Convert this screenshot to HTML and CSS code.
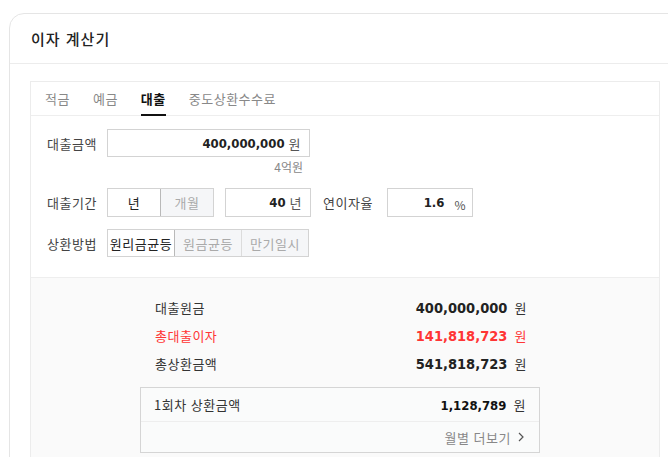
FILE: index.html
```html
<!DOCTYPE html>
<html lang="ko">
<head>
    <meta charset="UTF-8">
    <meta name="viewport" content="width=device-width, initial-scale=1.0">
    <title>이자 계산기</title>
    <link rel="stylesheet" href="styles.css">
</head>
<body>
    <div class="card">
        <div class="card-header">
            <h2>이자 계산기</h2>
        </div>

        <div class="card-body">
            <div class="calc">
                <ul class="tabs">
                    <li>적금</li>
                    <li>예금</li>
                    <li class="active">대출</li>
                    <li>중도상환수수료</li>
                </ul>

                <div class="form">
                    <div class="form-row first">
                        <span class="label">대출금액</span>
                        <div class="field amount">
                            <span class="num">400,000,000</span>
                            <span class="unit">원</span>
                        </div>
                    </div>
                    <div class="hint">4억원</div>

                    <div class="form-row tall">
                        <span class="label">대출기간</span>
                        <div class="toggle">
                            <span class="on">년</span>
                            <span>개월</span>
                        </div>
                        <div class="field period">
                            <span class="num">40</span>
                            <span class="unit">년</span>
                        </div>
                        <span class="label rate-label">연이자율</span>
                        <div class="field rate">
                            <span class="num">1.6</span>
                            <span class="unit pct">%</span>
                        </div>
                    </div>

                    <div class="form-row">
                        <span class="label">상환방법</span>
                        <div class="toggle method">
                            <span class="on">원리금균등</span>
                            <span>원금균등</span>
                            <span>만기일시</span>
                        </div>
                    </div>
                </div>

                <div class="result">
                    <div class="result-list">
                        <div class="result-row">
                            <span>대출원금</span>
                            <span><b>400,000,000</b> 원</span>
                        </div>
                        <div class="result-row red">
                            <span>총대출이자</span>
                            <span><b>141,818,723</b> 원</span>
                        </div>
                        <div class="result-row">
                            <span>총상환금액</span>
                            <span><b>541,818,723</b> 원</span>
                        </div>
                    </div>

                    <div class="pay-box">
                        <div class="pay-row">
                            <span>1회차 상환금액</span>
                            <span><b>1,128,789</b> 원</span>
                        </div>
                        <div class="more">
                            월별 더보기
                            <svg width="8" height="10" viewBox="0 0 8 10"><path d="M2 1l4 4-4 4" fill="none" stroke="#555" stroke-width="1.2"/></svg>
                        </div>
                    </div>
                </div>
            </div>
        </div>
    </div>
</body>
</html>
```

FILE: styles.css
```css
/* Base */
body {
    margin: 0;
    padding: 13px 0 0 9px;
    font-family: 'Noto Sans CJK KR', 'Noto Sans', sans-serif;
    font-size: 13px;
    letter-spacing: 0.5px;
    color: #333;
    background-color: #fff;
    overflow: hidden;
}

/* Card */
.card {
    width: 690px;
    border: 1px solid #e5e5e5;
    border-radius: 15px 0 0 0;
    background-color: #fff;
}

.card-header {
    height: 49px;
    display: flex;
    align-items: center;
    padding-left: 21px;
    border-bottom: 1px solid #ececec;
}

.card-header h2 {
    margin: 0;
    font-size: 15px;
    font-weight: 500;
    letter-spacing: 1px;
    color: #222;
}

.card-body {
    padding: 17px 0 0 20px;
}

/* Calculator box */
.calc {
    width: 628px;
    border: 1px solid #ececec;
    border-bottom: none;
    background-color: #fff;
}

.tabs {
    list-style: none;
    margin: 0;
    padding: 0 0 0 14px;
    height: 33px;
    display: flex;
    gap: 23px;
    border-bottom: 1px solid #eeeeee;
}

.tabs li {
    display: flex;
    align-items: center;
    color: #888;
    font-size: 13px;
    border-bottom: 2px solid transparent;
    margin-bottom: -1px;
}

.tabs li.active {
    color: #111;
    font-weight: 700;
    border-bottom-color: #111;
}

/* Form */
.form {
    padding: 13px 0 20px 16px;
}

.form-row {
    display: flex;
    align-items: center;
    height: 28px;
    margin-bottom: 12px;
}

.form-row.first {
    margin-bottom: 4px;
}

.form-row.tall {
    height: 29px;
}

.form-row:last-child {
    margin-bottom: 0;
}

.label {
    width: 60px;
    color: #444;
}

.field {
    height: 28px;
    box-sizing: border-box;
    border: 1px solid #d3d3d3;
    display: flex;
    align-items: center;
    justify-content: flex-end;
    padding-right: 8px;
    gap: 4px;
    background-color: #fff;
}

.num {
    font-family: 'DejaVu Sans Condensed', 'DejaVu Sans', sans-serif;
    font-stretch: condensed;
    font-weight: 700;
    font-size: 13px;
    letter-spacing: 0;
    color: #222;
}

.unit {
    color: #555;
}

.unit.pct {
    padding-top: 4px;
    font-size: 12px;
    margin-left: 6px;
}

.amount {
    width: 203px;
}

.hint {
    width: 256px;
    text-align: right;
    color: #888;
    font-size: 12px;
    letter-spacing: 0;
    line-height: 12px;
    margin: 4px 0 15px 0;
}

.toggle {
    display: flex;
    height: 29px;
    box-sizing: border-box;
    border: 1px solid #d3d3d3;
}

.toggle span {
    display: flex;
    align-items: center;
    justify-content: center;
    width: 52px;
    background-color: #f5f6f8;
    color: #aaa;
    border-left: 1px solid #dcdcdc;
}

.toggle span:first-child {
    border-left: none;
}

.toggle span.on {
    background-color: #fff;
    color: #222;
    border-right: 1px solid #b9b9b9;
}

.toggle span.on + span {
    border-left: none;
}

.toggle.method {
    height: 28px;
}

.toggle.method span {
    width: 66px;
}

.period {
    width: 86px;
    height: 29px;
    margin-left: 11px;
}

.rate-label {
    width: 64px;
    margin-left: 12px;
}

.rate {
    width: 86px;
    height: 29px;
    padding-right: 6px;
}

/* Results */
.result {
    background-color: #fafafa;
    border-top: 1px solid #eeeeee;
    padding: 15px 0 20px 109px;
}

.result-list {
    width: 372px;
    padding-left: 15px;
    margin-bottom: 10px;
}

.result-row {
    display: flex;
    justify-content: space-between;
    align-items: center;
    height: 28px;
    color: #333;
}

.result-row b,
.pay-row b {
    font-family: 'DejaVu Sans Condensed', 'DejaVu Sans', sans-serif;
    font-stretch: condensed;
    font-weight: 700;
    font-size: 14.5px;
    letter-spacing: 0;
    color: #222;
    margin-right: 3px;
}

.result-row.red,
.result-row.red b {
    color: #ff3535;
}

.pay-box {
    width: 398px;
    border: 1px solid #d5d5d5;
    background-color: #fafbfb;
}

.pay-row {
    display: flex;
    justify-content: space-between;
    align-items: center;
    height: 33px;
    padding: 0 13px;
    border-bottom: 1px solid #eeeeee;
    color: #333;
}

.pay-row b {
    font-size: 13px;
    color: #111;
}

.more {
    height: 30px;
    display: flex;
    justify-content: flex-end;
    align-items: center;
    gap: 6px;
    padding-right: 14px;
    color: #888;
}
```
